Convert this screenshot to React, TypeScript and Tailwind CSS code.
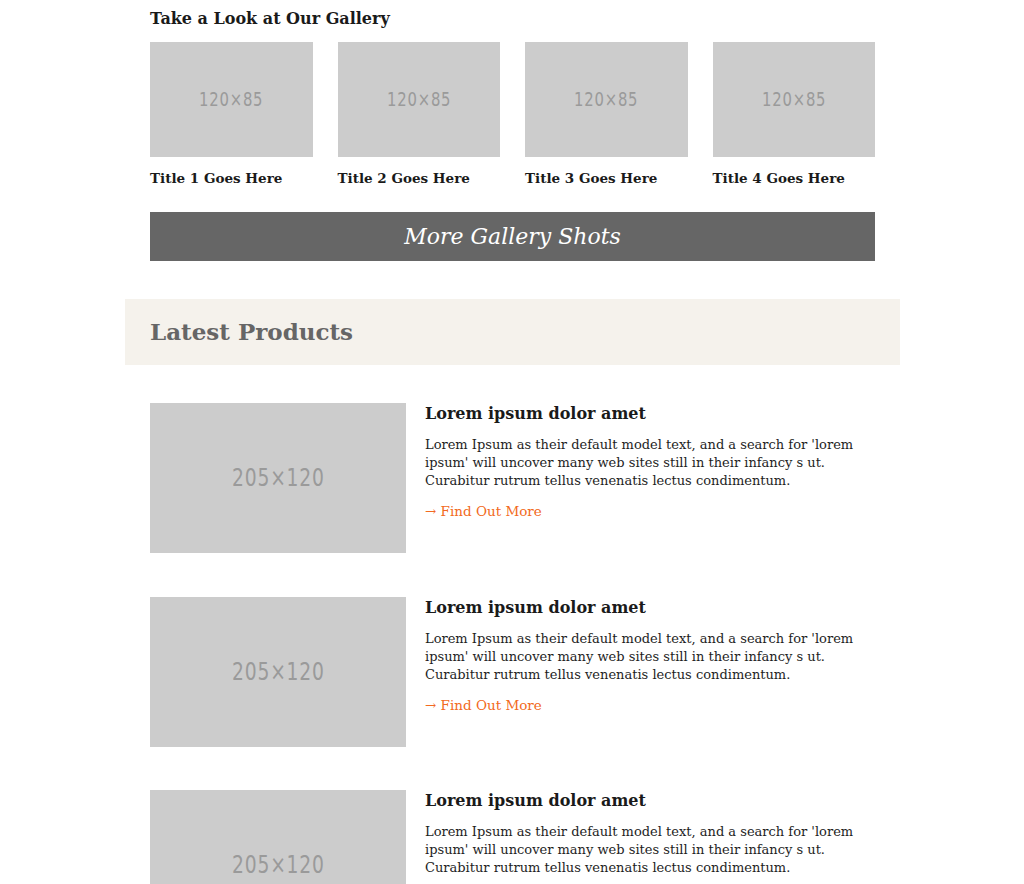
import React from "react";

const serif = "font-['DejaVu_Serif',Georgia,serif]";

const gallery = ["Title 1 Goes Here", "Title 2 Goes Here", "Title 3 Goes Here", "Title 4 Goes Here"];

function Placeholder({ label, className, textSize }: { label: string; className: string; textSize: string }) {
  return (
    <div className={`flex items-center justify-center bg-[#cccccc] ${className}`}>
      <span className={`inline-block scale-x-[0.78] text-[#9a9a9a] tracking-[1px] font-['DejaVu_Sans',sans-serif] ${textSize}`}>
        {label}
      </span>
    </div>
  );
}

function Product() {
  return (
    <div className="flex gap-[19px]">
      <Placeholder label="205×120" className="w-[256px] h-[150px] shrink-0" textSize="text-[24px]" />
      <div className="flex-1">
        <h3 className="text-[16px] leading-[22px] font-bold text-[#1a1a1a]">Lorem ipsum dolor amet</h3>
        <p className="mt-[11px] text-[13px] leading-[18px] text-[#1e1e1e]">
          Lorem Ipsum as their default model text, and a search for 'lorem ipsum' will uncover many web sites still in their infancy s ut. Curabitur rutrum tellus venenatis lectus condimentum.
        </p>
        <a href="#" className="block mt-[12px] text-[13.5px] leading-[18px] text-[#f26a21]">
          → Find Out More
        </a>
      </div>
    </div>
  );
}

export default function App() {
  return (
    <div className={`w-[1024px] h-[884px] overflow-hidden bg-white ${serif}`}>
      <div className="w-[775px] ml-[125px]">
        {/* Gallery */}
        <section className="px-[25px]">
          <h2 className="mt-[9px] text-[16px] leading-[20px] font-bold text-[#1a1a1a]">Take a Look at Our Gallery</h2>
          <div className="mt-[13px] grid grid-cols-4 gap-[25px]">
            {gallery.map((t) => (
              <div key={t}>
                <Placeholder label="120×85" className="h-[115px]" textSize="text-[19px]" />
                <p className="mt-[12px] text-[13.5px] leading-[18px] font-bold text-[#1a1a1a]">{t}</p>
              </div>
            ))}
          </div>
          <button className="mt-[25px] w-full h-[49px] bg-[#666666] text-white italic text-[22px]">
            More Gallery Shots
          </button>
        </section>

        {/* Latest products */}
        <div className="mt-[38px] h-[66px] bg-[#f5f2ec] px-[25px] flex items-center">
          <h2 className="text-[23px] font-bold text-[#666666]">Latest Products</h2>
        </div>
        <div className="mt-[38px] px-[25px] flex flex-col gap-[43.5px]">
          <Product />
          <Product />
          <Product />
        </div>
      </div>
    </div>
  );
}
